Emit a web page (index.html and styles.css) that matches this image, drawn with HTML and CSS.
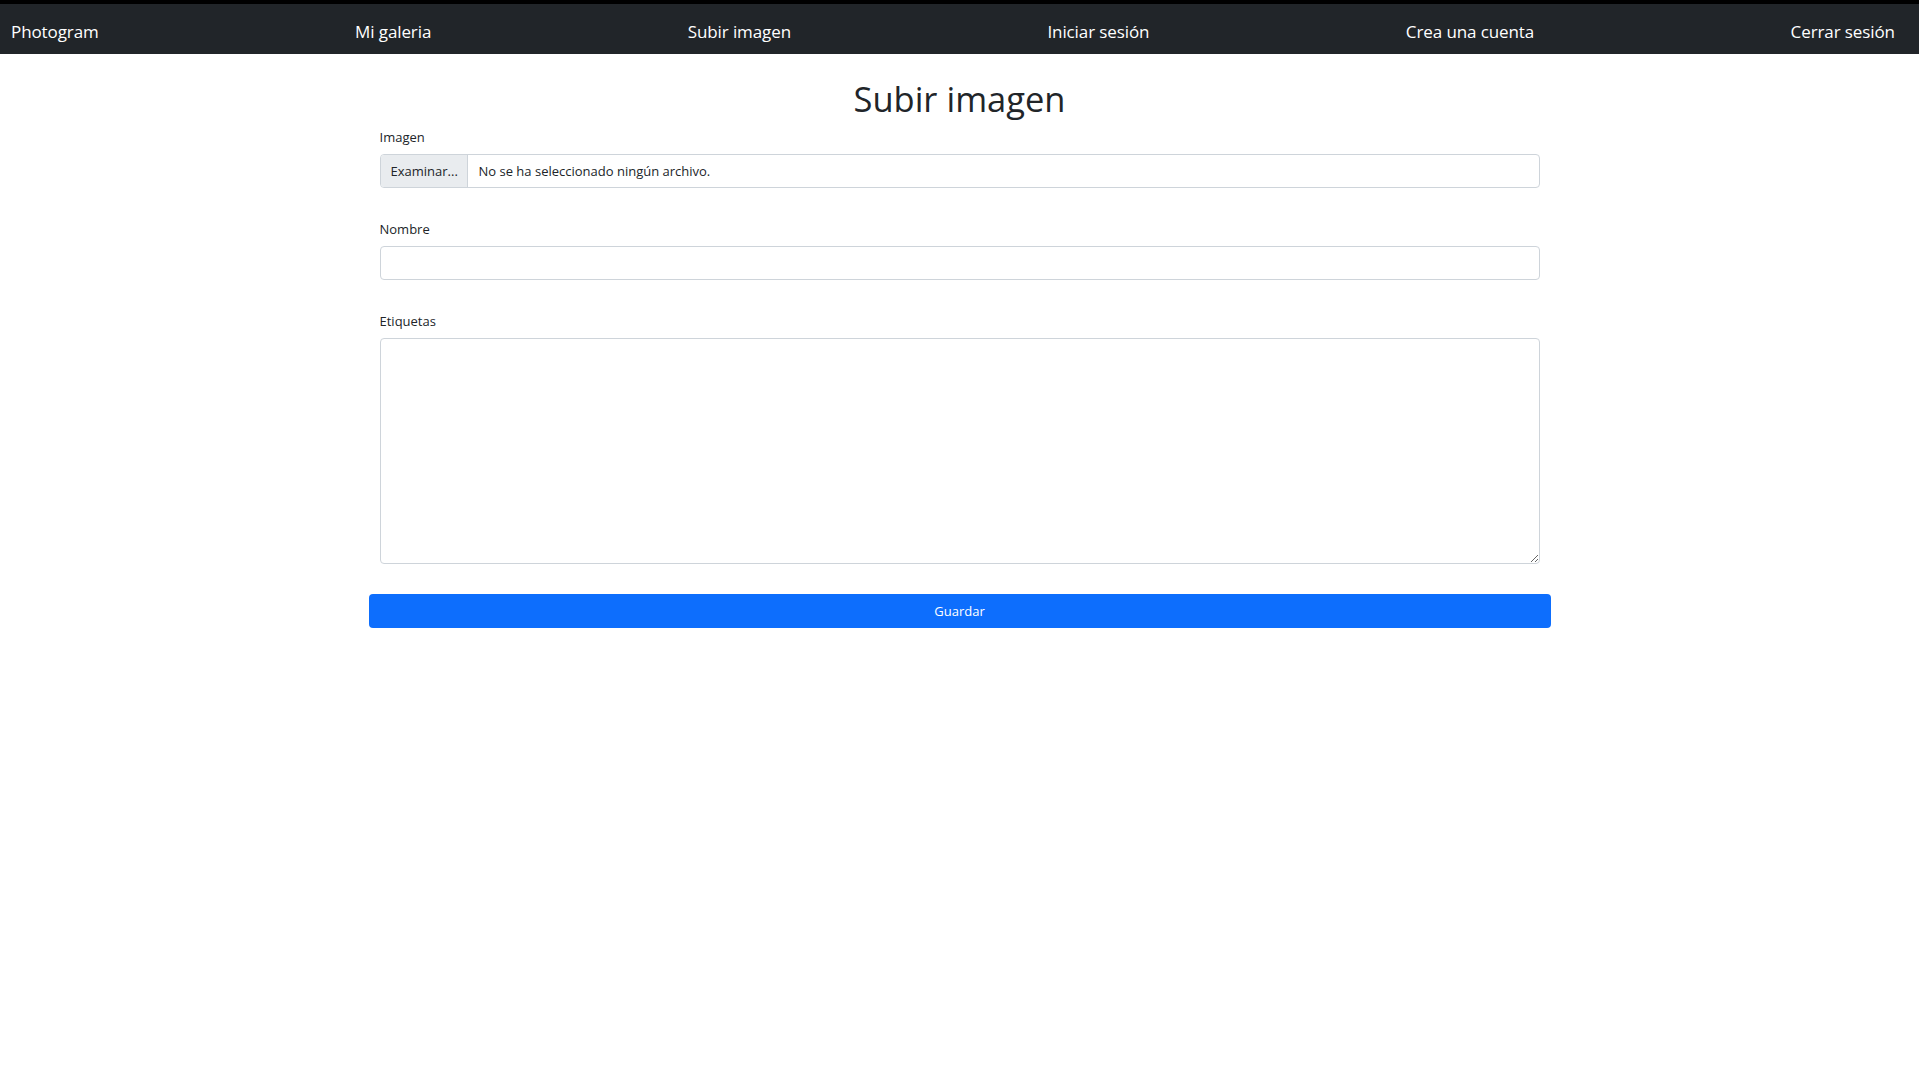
FILE: index.html
```html
<!DOCTYPE html>
<html lang="es">
<head>
<meta charset="utf-8">
<title>Subir imagen</title>
<link rel="stylesheet" href="styles.css">
</head>
<body>
<nav class="navbar">
  <a class="nav-link" href="#">Photogram</a>
  <a class="nav-link" href="#">Mi galeria</a>
  <a class="nav-link" href="#">Subir imagen</a>
  <a class="nav-link" href="#">Iniciar sesión</a>
  <a class="nav-link" href="#">Crea una cuenta</a>
  <a class="nav-link" href="#">Cerrar sesión</a>
</nav>
<main class="page">
  <h1 class="title">Subir imagen</h1>
  <form class="form">
    <div class="group">
      <label class="label">Imagen</label>
      <div class="file">
        <span class="file-btn">Examinar...</span>
        <span class="file-text">No se ha seleccionado ningún archivo.</span>
      </div>
    </div>
    <div class="group">
      <label class="label">Nombre</label>
      <input class="input" type="text">
    </div>
    <div class="group">
      <label class="label">Etiquetas</label>
      <textarea class="textarea"></textarea>
    </div>
    <button class="btn" type="button">Guardar</button>
  </form>
</main>
</body>
</html>
```
FILE: styles.css
```css
* { box-sizing: border-box; }
html, body { margin: 0; padding: 0; background: #fff; }
body {
  font-family: "Open Sans", "Noto Sans", sans-serif;
  color: #212529;
}
.navbar {
  display: flex;
  justify-content: space-between;
  align-items: center;
  height: 54px;
  border-top: 4px solid #000;
  background: #212529;
  padding: 5px 24px 0 11px;
}
.nav-link {
  color: #fff;
  text-decoration: none;
  font-size: 17px;
  line-height: 24px;
  letter-spacing: -0.1px;
}
.page {
  width: 1182px;
  margin: 0 auto;
}
.title {
  margin: 21px 0 0;
  font-size: 34.5px;
  font-weight: 400;
  line-height: 48px;
  text-align: center;
}
.form { display: flex; flex-direction: column; }
.group {
  display: flex;
  flex-direction: column;
  padding: 0 11px;
  margin-top: 4px;
}
.group + .group { margin-top: 31px; }
.label {
  font-size: 13px;
  line-height: 20px;
  margin-bottom: 7px;
}
.file {
  display: flex;
  height: 34px;
  border: 1px solid #ced4da;
  border-radius: 4px;
  overflow: hidden;
  font-size: 13px;
}
.file-btn {
  display: flex;
  align-items: center;
  width: 87px;
  padding-left: 10px;
  background: #e9ecef;
  border-right: 1px solid #ced4da;
}
.file-text {
  display: flex;
  align-items: center;
  padding-left: 11px;
}
.input {
  height: 34px;
  border: 1px solid #ced4da;
  border-radius: 4px;
  font: inherit;
  font-size: 13px;
  padding: 0 10px;
}
.textarea {
  height: 226px;
  border: 1px solid #ced4da;
  border-radius: 4px;
  font: inherit;
  font-size: 13px;
  padding: 6px 10px;
}
.btn {
  margin-top: 30px;
  height: 34px;
  border: 0;
  border-radius: 4px;
  background: #0d6efd;
  color: #fff;
  font: inherit;
  font-size: 13px;
  cursor: pointer;
}
```
